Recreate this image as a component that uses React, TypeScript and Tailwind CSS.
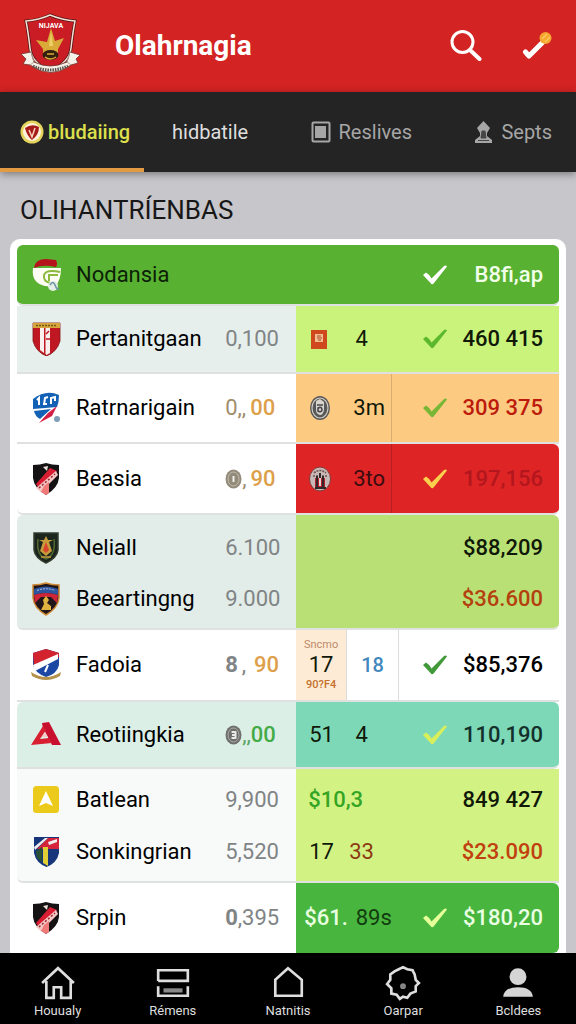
import type { ReactNode } from "react";

const SHIELD = "M2 3 Q9 3 15 1 Q21 3 28 3 V16 Q27 26 15 33 Q3 26 2 16Z";

function Crest({ kind }: { kind: string }) {
  return (
    <svg viewBox="0 0 30 34" className="h-[34px] w-[30px] shrink-0" aria-hidden="true">
      {kind === "cap" && (
        <g>
          <path d="M2 10 Q0 25 14 28 L24 29 Q30 22 30 10Z" fill="#fdfdf4" />
          <path d="M3 10 Q4 1 15 1 L25 2 Q27 6 25 9 Q12 6 3 10Z" fill="#b5121b" />
          <path d="M29 14 Q15 11 13 17 Q12 24 20 25 M27 17 H18 V23" fill="none" stroke="#8cb83e" strokeWidth="2" />
          <circle cx="22" cy="28" r="5" fill="#e3eee6" />
          <path d="M19 27 Q22 22 24 27 T28 31" fill="none" stroke="#6e93a5" strokeWidth="1.6" />
        </g>
      )}
      {kind === "stripes" && (
        <g>
          <path d="M2 1 H29 V19 Q26 30 15.500 34 Q5 30 2 19Z" fill="#c01822" stroke="#861218" strokeWidth=".8" />
          <path d="M9 6 H13 V31 L9 28Z M14.500 6 H19 V31 L15.500 33 L14.500 32Z" fill="#f7f0ec" />
          <path d="M15 12 L18 9 M15 17 H19" stroke="#c01822" strokeWidth="1.500" />
          <path d="M2 1 H29 V6 H2Z" fill="#d7a63a" />
          <path d="M5 3.500 H26" stroke="#73591c" strokeWidth="1.500" strokeDasharray="2 1" />
        </g>
      )}
      {kind === "blue" && (
        <g>
          <path d="M2 8 Q15 -2 28 4 Q28 11 26 16 L2 18Z" fill="#1261b5" />
          <path d="M3 20 L20 18 L9 28 Q4 25 3 20Z" fill="#1261b5" />
          <path d="M26 15 L21 25 L8 32 L17 22Z" fill="#d31f45" />
          <path d="M6 9 L8 7 V14 M13 14 L14 7 L17 6 M12 13 H16 M20 13 V7 L24 6 V10" fill="none" stroke="#fff" strokeWidth="2" />
          <circle cx="26" cy="28" r="3" fill="#7e9db7" />
        </g>
      )}
      {kind === "sash" && (
        <g>
          <path d={SHIELD} fill="#151214" />
          <path d="M5 22 L19 6 L26 9 L9 28Z" fill="#d91e34" />
          <path d="M5 26 L25 9 L27 13 L10 30Z" fill="#f3c8c4" />
          <path d="M8 26 L24 12" stroke="#9d2530" strokeWidth="1.500" strokeDasharray="2 2" />
          <path d="M13 24 L18 20 V31 L15 33 L10 30Z" fill="#ef7a78" />
          <path d="M12 5 L17 4 L16 9Z" fill="#e8ddd7" />
        </g>
      )}
      {kind === "flame" && (
        <g>
          <path d="M3 2 H27 V19 Q26 27 15 32 Q4 27 3 19Z" fill="#1b241d" stroke="#343c2f" strokeWidth="1.500" />
          <path d="M7 8 Q5 24 15 28 Q25 24 23 8" fill="none" stroke="#53682f" strokeWidth="1.500" />
          <path d="M8 9 H13 L15 5 L17 9 H22 L18 11 L21 20 L15 25 L9 20 L12 11Z" fill="#c69b3c" />
          <path d="M15 11 L18 19 L15 22 L12 19Z" fill="#d9442c" />
          <path d="M10 26 H20" stroke="#c69b3c" strokeWidth="1.500" />
        </g>
      )}
      {kind === "arch" && (
        <g>
          <path d={SHIELD} fill="#21171a" stroke="#cf8a35" strokeWidth="1.500" />
          <path d="M3 7 Q15 2 27 7 V13 Q15 9 3 13Z" fill="#2b559e" />
          <path d="M6 8.500 Q15 5 24 8.500" fill="none" stroke="#b9c6e2" strokeDasharray="2 1" />
          <path d="M3 13 Q15 9 27 13 L26 21 L20 15 H10 L4 21Z" fill="#cc2638" />
          <path d="M15 14 L18 18 L16 21 L20 24 V28 H10 L13 22 L12 18Z" fill="#dfb340" />
        </g>
      )}
      {kind === "ribbon" && (
        <g>
          <path d="M2 5 L15 1 L28 5 V17 Q26 26 15 29 Q4 25 2 17Z" fill="#1c47a3" />
          <path d="M2 5 L15 1 L28 5 V9 L3 18Z" fill="#d3232f" />
          <path d="M2 17 L27 6 V11 L4 23Z" fill="#fff" />
          <path d="M14 24 L17 17" stroke="#fff" strokeWidth="2" />
          <path d="M0 24 Q15 34 30 24 L29 28 Q15 36 1 28Z" fill="#b4924a" />
        </g>
      )}
      {kind === "letter" && (
        <g>
          <path d="M11 5 L18 4 L30 27 H21 L12 10Z" fill="#c8102e" />
          <path d="M12 8 L15 12 L9 21 L18 20 L21 25 L0 27Z" fill="#d81f32" />
          <path d="M14 14 L17 19 H11Z" fill="#f4c9c8" />
        </g>
      )}
      {kind === "arrow" && (
        <g>
          <rect x="2" y="3" width="26" height="27" rx="3.500" fill="#ecca1b" />
          <path d="M15 8 L22 23 L15 20 L8 23Z" fill="#fff" />
        </g>
      )}
      {kind === "quarters" && (
        <g>
          <path d="M3 2 H28 V18 Q26 28 15.500 32 Q5 28 3 18Z" fill="#17357b" />
          <path d="M6 14 L17 3 H28 V14Z" fill="#d4233a" />
          <path d="M3 12 L14 3 H17 L4 15Z M17 7 L26 4 V7 L18 10Z" fill="#eee" />
          <path d="M12 12 H17 V31 L12 28Z" fill="#dfce36" />
          <path d="M5 16 L11 12 V27 L6 23Z" fill="#285138" />
        </g>
      )}
    </svg>
  );
}

function AppLogo() {
  return (
    <svg viewBox="0 0 60 62" className="mb-1 h-[62px] w-[60px] shrink-0" role="img" aria-label="Olahrnagia">
      <path d="M6 8 Q19 7 30 2 Q42 7 55 8 Q53 18 51 35 Q50 49 30 58 Q11 49 10 35 Q8 18 6 8Z" fill="#c91c25" stroke="#4a1517" strokeWidth="3" />
      <path d="M6 8 Q19 7 30 2 Q42 7 55 8 Q53 18 51 35 Q50 49 30 58 Q11 49 10 35 Q8 18 6 8Z" fill="none" stroke="#f7dfd2" strokeWidth="1.500" />
      <text x="31" y="15" textAnchor="middle" fontFamily="Roboto, sans-serif" fontSize="7" fontWeight="700" fill="#fff">NIJAVA</text>
      <path d="M31 15 L35 28 L44 25 L38 36 V43 H23 V36 L16 27 L27 29Z" fill="#d9aa38" />
      <path d="M31 18 L33 33 H29Z" fill="#edd068" />
      <ellipse cx="30.500" cy="42" rx="8" ry="5" fill="#33200e" />
      <path d="M27 41 H34 M25 44 Q30 48 36 44" stroke="#d9aa38" strokeWidth="1.500" fill="none" />
      <path d="M1 41 L11 39 L14 49 Q30 57 47 49 L50 39 L60 42 L56 46 L58 50 L51 52 Q31 67 10 52 L3 51 L6 46Z" fill="#f5f1e8" stroke="#71322c" strokeWidth=".8" />
      <path d="M13 53 Q30 61 48 53" fill="none" stroke="#55504a" strokeWidth="3" strokeDasharray="1.500 1" />
      <path d="M11 39 L14 49 L10 52 M50 39 L47 49 L51 52" fill="none" stroke="#a99c90" />
    </svg>
  );
}

function Check({ className }: { className: string }) {
  return (
    <svg viewBox="0 0 24 20" className={"h-5 w-6 shrink-0 " + className} role="img" aria-label="Confirmed">
      <path d="M0 10 L3 7.500 Q6 9 8.500 13.500 L21 1 Q23 0 24 1.500 L11 18 Q9 20.500 7.500 18Z" fill="currentColor" />
    </svg>
  );
}

function Badge({ kind }: { kind: string }) {
  return (
    <svg viewBox="0 0 22 26" className="mr-1 h-[26px] w-[22px]" aria-hidden="true">
      {kind === "card" && (
        <g>
          <rect x="2" y="4" width="16" height="19" fill="#d0481d" />
          <rect x="6" y="8" width="8" height="8" fill="#f4bd91" />
          <path d="M8 10 H12 M8 12 H13 M9 14 H12" stroke="#a64b25" />
        </g>
      )}
      {kind === "seal" && (
        <g>
          <ellipse cx="11" cy="13" rx="10" ry="12" fill="#57585a" />
          <ellipse cx="11" cy="13" rx="8" ry="10" fill="none" stroke="#d3ccc2" strokeWidth="1.200" />
          <path d="M7 6 L11 4 L15 7 V15 Q14 20 11 20 Q7 19 7 15Z" fill="#d9d4cd" />
          <path d="M8 10 H14 M9 13 Q13 11 13 15 Q12 18 9 16Z" fill="none" stroke="#46464b" strokeWidth="1.600" />
        </g>
      )}
      {kind === "tower" && (
        <g>
          <ellipse cx="11" cy="13" rx="10.500" ry="12" fill="#c8b9b6" stroke="#813536" />
          <path d="M5 7 Q11 2 17 7 M4 10 H18" fill="none" stroke="#6e5553" strokeWidth="1.600" strokeDasharray="2 1" />
          <path d="M6 12 H16 V21 H6Z" fill="#b51f2b" />
          <path d="M8 10 V21 M14 10 V21 M6 22 H17 M11 7 V12" stroke="#342729" strokeWidth="2" />
          <path d="M11 12 V20" stroke="#e4d8d4" strokeWidth="2" />
        </g>
      )}
    </svg>
  );
}

function Coin({ className, mark }: { className: string; mark: string }) {
  return (
    <svg viewBox="0 0 17 20" className={"h-5 w-[17px] " + className} aria-hidden="true">
      <ellipse cx="8.500" cy="10" rx="8" ry="9.500" fill="currentColor" />
      <ellipse cx="8.500" cy="10" rx="5.500" ry="7" fill="none" stroke="#fff" strokeOpacity=".4" />
      <path d={mark} fill="none" stroke="#fff" strokeOpacity=".85" strokeWidth="2" strokeLinejoin="round" />
    </svg>
  );
}

type Row = {
  name: string;
  crest: string;
  height: string;
  pad?: string;
  border?: string;
  value: ReactNode;
  left: string;
  leftCorner?: string;
  right: string;
  rightCorner?: string;
  status?: ReactNode;
  check?: string;
  amount: string;
  amountColor: string;
};

const RULE = "border-b-2 border-[#dfe1e1]";
const slot = "flex w-[51px] shrink-0 items-center justify-center";
const slot2 = "flex w-[45px] shrink-0 items-center justify-center";
const cents = "pl-1 font-medium";

const rows: Row[] = [
  {
    name: "Pertanitgaan", crest: "stripes", height: "h-[68px]", value: "0,100",
    left: "bg-[#e7efed]", right: "bg-[#c9f37b]", check: "text-[#5cb82c]",
    status: <><span className={slot}><Badge kind="card" /></span><span className={slot2 + " pr-4"}>4</span></>,
    amount: "460 415", amountColor: "text-[#101808]",
  },
  {
    name: "Ratrnarigain", crest: "blue", height: "h-[70px]",
    value: <><span className="text-[#a18d6c]">0,,</span><span className={cents + " text-[#dda04a]"}>00</span></>,
    left: "bg-white", right: "bg-[#fdca82]", check: "text-[#77b735]",
    status: <><span className={slot}><Badge kind="seal" /></span><span className={slot2 + " h-full border-r border-[#d9ac70]"}>3m</span></>,
    amount: "309 375", amountColor: "text-[#bc1a0b]",
  },
  {
    name: "Beasia", crest: "sash", height: "h-[71px]",
    value: <><Coin className="text-[#938b79]" mark="M8.500 7 V13" /><span className="text-[#a18d6c]">,</span><span className={cents + " text-[#dda04a]"}>90</span></>,
    left: "bg-white", leftCorner: "rounded-bl-md", right: "bg-[#de2425]", rightCorner: "rounded-r-md", check: "text-[#fbd04c]",
    status: <><span className={slot}><Badge kind="tower" /></span><span className={slot2 + " h-full border-r border-[#b52022] text-[#3b0d10]"}>3to</span></>,
    amount: "197,156", amountColor: "text-[#b3171d]",
  },
  {
    name: "Neliall", crest: "flame", height: "h-[58px]", pad: "pt-2", border: "border-b-0", value: "6.100",
    left: "bg-[#e2ece8]", leftCorner: "rounded-tl-md", right: "bg-[#b9e074]", rightCorner: "rounded-tr-md",
    amount: "$88,209", amountColor: "text-[#101808]",
  },
  {
    name: "Beeartingng", crest: "arch", height: "h-[57px]", pad: "pb-1", value: "9.000",
    left: "bg-[#e2ece8]", leftCorner: "rounded-bl-md", right: "bg-[#b9e074]", rightCorner: "rounded-br-md",
    amount: "$36.600", amountColor: "text-[#b5400f]",
  },
  {
    name: "Fadoia", crest: "ribbon", height: "h-[72px]",
    value: <><span className="font-bold">8</span><span className="px-1">,</span><span className={cents + " text-[#dda04a]"}>90</span></>,
    left: "bg-white", right: "bg-white", check: "text-[#41993a]",
    status: (
      <>
        <span className="flex h-full w-[51px] shrink-0 flex-col items-center justify-center border-r border-[#dcdcdc] bg-[#fdebd5]">
          <span className="text-[11px] leading-3 text-[#bd8a6a]">Sncmo</span>
          <span className="leading-7">17</span>
          <span className="text-[11px] leading-3 font-medium text-[#c5702c]">90?F4</span>
        </span>
        <span className="flex h-full w-[52px] shrink-0 items-center justify-center border-r border-[#dcdcdc] text-xl font-medium text-[#4388bd]">18</span>
      </>
    ),
    amount: "$85,376", amountColor: "text-black",
  },
  {
    name: "Reotiingkia", crest: "letter", height: "h-[67px]",
    value: <><Coin className="text-[#6f706c]" mark="M6.500 7 H10.500 V10 H7 M10.500 10 V13 H6.500" /><span className="text-[#5aa568]">,,</span><span className="font-medium text-[#44ab47]">00</span></>,
    left: "bg-[#dcefe7]", leftCorner: "rounded-tl-md", right: "bg-[#7dd8b7]", rightCorner: "rounded-r-md", check: "text-[#d9ee5b]",
    status: <><span className={slot}>51</span><span className={slot2 + " pr-4"}>4</span></>,
    amount: "110,190", amountColor: "text-[#14302b]",
  },
  {
    name: "Batlean", crest: "arrow", height: "h-[57px]", pad: "pt-1", border: "border-b-0", value: "9,900",
    left: "bg-[#f8f9f9]", right: "bg-[#d3f284]",
    status: <span className="pl-3 font-medium text-[#36a524]">$10,3</span>,
    amount: "849 427", amountColor: "text-[#101808]",
  },
  {
    name: "Sonkingrian", crest: "quarters", height: "h-[57px]", pad: "pb-1", value: "5,520",
    left: "bg-[#f8f9f9]", leftCorner: "rounded-bl-md", right: "bg-[#d3f284]",
    status: <><span className={slot}>17</span><span className={slot2 + " pr-4 text-[#8c3a12]"}>33</span></>,
    amount: "$23.090", amountColor: "text-[#c1400f]",
  },
  {
    name: "Srpin", crest: "sash", height: "h-[70px]", border: "border-b-0",
    value: <><span className="font-bold">0</span>,395</>,
    left: "bg-white", right: "bg-[#48b53f]", rightCorner: "rounded-r-md", check: "text-[#e6ff9a]",
    status: <span className="flex gap-2 pl-2"><span className="font-medium text-[#e9ffe0]">$61.</span><span className="text-[#123c0e]">89s</span></span>,
    amount: "$180,20", amountColor: "text-[#eaffe2]",
  },
];

function TeamRow({ row }: { row: Row }) {
  const cell = `${row.border ?? RULE} bg-clip-padding px-0 ${row.pad ?? "py-0"} `;
  return (
    <tr className={row.height}>
      <th scope="row" className={`${cell} text-left font-normal text-black ${row.left} ${row.leftCorner ?? ""}`}>
        <div className="flex items-center gap-[15px] pl-3.5">
          <Crest kind={row.crest} />
          {row.name}
        </div>
      </th>
      <td className={`${cell} text-[#808485] ${row.left}`}>
        <div className="flex items-center">{row.value}</div>
      </td>
      <td className={`${cell} h-[inherit] text-[#101808] ${row.right}`}>
        <div className="flex h-full items-center">
          {row.status}
          {row.check && <Check className={"mr-1.5 ml-auto " + row.check} />}
        </div>
      </td>
      <td className={`${cell} text-right font-medium whitespace-nowrap ${row.right} ${row.rightCorner ?? ""} ${row.amountColor}`}>
        <span className="pr-4">{row.amount}</span>
      </td>
    </tr>
  );
}

function NavItem({ label, children }: { label: string; children: ReactNode }) {
  return (
    <a href="#" className="flex flex-col items-center gap-0.5 pt-3 text-[#dedede]">
      <svg viewBox="0 0 34 34" className="size-9" fill="none" stroke="currentColor" strokeWidth="2.500" aria-hidden="true">{children}</svg>
      <span className="text-[13px] leading-4">{label}</span>
    </a>
  );
}

export default function App() {
  return (
    <div className="flex min-h-screen flex-col bg-[#c7c6ca] font-['Roboto',sans-serif]">
      <header className="flex h-[92px] items-center bg-[#d32323] pr-6 pl-5 text-white">
        <AppLogo />
        <h1 className="ml-[35px] flex-1 text-[28px] font-bold">Olahrnagia</h1>
        <button type="button" aria-label="Search">
          <svg viewBox="0 0 32 32" className="size-8" fill="none" stroke="currentColor" aria-hidden="true">
            <circle cx="12.500" cy="12" r="10.500" strokeWidth="3" />
            <path d="M20 20 L29.500 29" strokeWidth="4" strokeLinecap="round" />
          </svg>
        </button>
        <button type="button" aria-label="Mark" className="ml-10">
          <svg viewBox="0 0 30 30" className="size-[30px]" aria-hidden="true">
            <path d="M3.500 21 L7 25 L21 11" fill="none" stroke="#fff" strokeWidth="5" strokeLinejoin="round" strokeLinecap="round" />
            <circle cx="23.500" cy="7" r="6" fill="#f6a72f" />
            <path d="M20 8 L25 3 M23 11 L28 6" stroke="#ffc65d" strokeWidth="1.500" />
          </svg>
        </button>
      </header>

      <nav aria-label="Sections" className="flex h-20 bg-[#242424] text-xl text-[#a6a6a6] shadow-[0_2px_8px_#00000066]">
        <a href="#" aria-current="page" className="flex w-1/4 items-center gap-1 border-b-4 border-[#e39b43] pt-1 pl-5 font-medium text-[#dde04c]">
          <svg viewBox="0 0 24 26" className="h-[26px] w-6 shrink-0" aria-hidden="true">
            <circle cx="12" cy="13" r="11.500" fill="#e5d45c" />
            <circle cx="12" cy="13" r="9" fill="#fff3dc" />
            <path d="M5 9 Q12 4 19 8 Q19 16 12 21 Q7 17 5 9Z" fill="#a61b18" />
            <path d="M9 11 L12 18 L15 9" fill="none" stroke="#f4d3bc" strokeWidth="1.500" />
          </svg>
          bludaiing
        </a>
        <div className="flex flex-1 items-center justify-between pr-6 pl-7">
          <a href="#" className="text-[#dedede]">hidbatile</a>
          <a href="#" className="flex items-center gap-2">
            <svg viewBox="0 0 20 22" className="h-[22px] w-5" aria-hidden="true">
              <rect x="1.500" y="1.500" width="17" height="19" rx="1" fill="none" stroke="currentColor" strokeWidth="2" />
              <rect x="4" y="5" width="11" height="12" fill="currentColor" />
            </svg>
            Reslives
          </a>
          <a href="#" className="flex items-center gap-2">
            <svg viewBox="0 0 19 22" className="h-[22px] w-[19px]" aria-hidden="true">
              <path d="M9.500 0 L16 7 L13 12 V15 L18 19 V22 H1 V19 L6 15 V12 L3 7Z" fill="currentColor" />
              <path d="M8 10 H11 L12 17 H7Z M4 19.500 H15" fill="#464646" stroke="#464646" />
            </svg>
            Septs
          </a>
        </div>
      </nav>

      <main className="flex flex-1 flex-col px-2.5">
        <h2 className="px-2.5 pt-5 pb-[11px] text-[26px] leading-9 text-[#171717]">OLIHANTRÍENBAS</h2>
        <div className="flex-1 rounded-t-[10px] bg-white px-[7px] pt-1.5">
          <table className="w-full table-fixed border-separate border-spacing-0 text-[22px] leading-7">
            <colgroup>
              <col className="w-[38.4%]" />
              <col className="w-[13.1%]" />
              <col className="w-[29%]" />
              <col />
            </colgroup>
            <thead>
              <tr className="h-[61px]">
                <th scope="colgroup" colSpan={2} className={`${RULE} rounded-l-md bg-[#59b131] bg-clip-padding p-0 text-left font-normal text-[#0c1f08]`}>
                  <div className="flex items-center gap-[15px] pl-3.5"><Crest kind="cap" />Nodansia</div>
                </th>
                <td className={`${RULE} bg-[#59b131] bg-clip-padding p-0`}>
                  <Check className="mr-1.5 ml-auto text-white" />
                </td>
                <td className={`${RULE} rounded-r-md bg-[#59b131] bg-clip-padding p-0 text-right font-medium text-[#f1ffe9]`}>
                  <span className="pr-4">B8fi,ap</span>
                </td>
              </tr>
            </thead>
            <tbody>
              {rows.map((row) => <TeamRow key={row.name} row={row} />)}
            </tbody>
          </table>
        </div>
      </main>

      <nav aria-label="Main" className="sticky bottom-0 grid h-[72px] grid-cols-5 bg-black">
        <NavItem label="Houualy">
          <path d="M2 17 L17 3 L32 17 M6 15 V31 H13 V21 H20 V31 H29 V15" />
        </NavItem>
        <NavItem label="Rémens">
          <path d="M3 15 V5 H31 V15 H3 M3 20 V29 H31 V20" />
          <path d="M8 24 H26" stroke="#888" strokeWidth="4" />
        </NavItem>
        <NavItem label="Natnitis">
          <path d="M5 14 L17 3 L30 14 V29 H5Z" />
        </NavItem>
        <NavItem label="Oarpar">
          <path d="M13 4 L17 2 L21 4 L26 5 L28 9 L29 14 L32 17 L29 20 L29 25 L24 27 L21 31 L17 30 L14 32 L11 28 L6 27 L6 22 L2 18 L5 14 L5 9 L9 6Z" />
          <circle cx="17" cy="20" r="1.500" stroke="#888" />
        </NavItem>
        <NavItem label="Bcldees">
          <circle cx="17" cy="11" r="8" fill="#d5d5d5" stroke="none" />
          <path d="M3 30 Q4 21 17 21 Q30 21 31 30Z" fill="#d5d5d5" stroke="none" />
        </NavItem>
      </nav>
    </div>
  );
}
